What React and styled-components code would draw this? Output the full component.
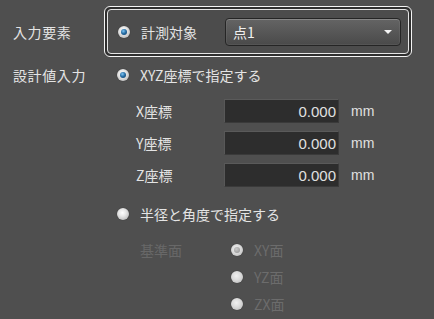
import React from "react";
import styled, { createGlobalStyle, css } from "styled-components";

const Global = createGlobalStyle`
  html, body { margin: 0; padding: 0; background: #4f4f4f; }
  body { font-family: "Noto Sans CJK JP", "Noto Sans", sans-serif; color: #e6e6e6; }
`;

const Page = styled.div`
  width: 434px;
  height: 319px;
  background: #4f4f4f;
  padding-top: 6px;
  box-sizing: border-box;
  font-size: 14px;
`;

const Row = styled.div`
  display: flex;
  align-items: center;
  height: ${(p) => p.$h || 26}px;
  margin-top: ${(p) => p.$mt || 0}px;
`;

const SideLabel = styled.div`
  width: 104px;
  padding-left: 13px;
  box-sizing: border-box;
  font-size: 14px;
  line-height: 20px;
  color: #e4e4e4;
  letter-spacing: 0.6px;
`;

const FocusFrame = styled.div`
  width: 308px;
  height: 51px;
  box-sizing: border-box;
  border: 1px solid #f4f4f4;
  border-radius: 6px;
  padding: 2px;
  background: #2f2f2f;
`;

const FocusInner = styled.div`
  height: 100%;
  box-sizing: border-box;
  border: 1px solid #e4e4e4;
  border-radius: 4px;
  background: #4c4c4c;
  display: flex;
  align-items: center;
  padding: 0 7px 0 10px;
`;

const RadioWrap = styled.label`
  display: flex;
  align-items: center;
  gap: 11px;
  font-size: 14px;
  line-height: 20px;
  color: ${(p) => (p.$disabled ? "#6c6c6c" : "#e4e4e4")};
`;

const RadioDot = styled.span`
  position: relative;
  width: 12px;
  height: 12px;
  border-radius: 50%;
  flex: none;
  box-sizing: border-box;
  background: radial-gradient(circle at 45% 40%, #ffffff 0%, #e8e8e8 35%, #a8a8a8 100%);
  box-shadow: 0 0 1px rgba(0, 0, 0, 0.5);
  ${(p) =>
    p.$disabled &&
    css`
      background: radial-gradient(circle at 45% 40%, #f0f0f0 0%, #dadada 45%, #b4b4b4 100%);
    `}
  ${(p) =>
    p.$checked &&
    css`
      &::after {
        content: "";
        position: absolute;
        left: 3px;
        top: 3px;
        width: 6px;
        height: 6px;
        border-radius: 50%;
        background: ${p.$disabled
          ? "radial-gradient(circle at 40% 35%, #c8c8c8 0%, #8e8e8e 100%)"
          : "radial-gradient(circle at 40% 35%, #7cc4f4 0%, #22689f 50%, #0d3a66 100%)"};
      }
    `}
`;

const Select = styled.div`
  margin-left: auto;
  width: 176px;
  height: 28px;
  box-sizing: border-box;
  border: 1px solid #252525;
  border-radius: 4px;
  background: linear-gradient(#646464, #4a4a4a);
  box-shadow: inset 0 1px 0 rgba(255, 255, 255, 0.18), inset 0 0 0 1px rgba(255, 255, 255, 0.06);
  display: flex;
  align-items: center;
  justify-content: space-between;
  padding: 0 8px 0 7px;
  font-size: 14px;
  color: #f0f0f0;
`;

const Arrow = styled.span`
  width: 0;
  height: 0;
  border-left: 4px solid transparent;
  border-right: 4px solid transparent;
  border-top: 4px solid #f4f4f4;
`;

const CoordRow = styled.div`
  display: flex;
  align-items: center;
  height: 24px;
  margin-top: ${(p) => p.$mt}px;
  padding-left: 136px;
`;

const CoordLabel = styled.div`
  width: 88px;
  font-size: 14px;
  line-height: 20px;
  color: #e4e4e4;
`;

const NumBox = styled.div`
  width: 115px;
  height: 24px;
  box-sizing: border-box;
  background: #2d2d2d;
  border: 1px solid #3a3a3a;
  border-top-color: #5a5a5a;
  border-left-color: #585858;
  display: flex;
  align-items: center;
  justify-content: flex-end;
  padding-right: 2px;
  font-family: "Liberation Sans", Arial, sans-serif;
  font-size: 15px;
  color: #e0e0e0;
`;

const Unit = styled.span`
  margin-left: 12px;
  font-family: "Liberation Sans", Arial, sans-serif;
  font-size: 14px;
  color: #e0e0e0;
`;

const Indent = styled.div`
  padding-left: ${(p) => p.$pl}px;
`;

const PlaneGrid = styled.div`
  display: grid;
  grid-template-columns: 91px auto;
  grid-auto-rows: 27px;
  align-items: center;
  padding-left: 140px;
  margin-top: 9px;
`;

const DimLabel = styled.div`
  font-size: 14px;
  color: #686868;
  line-height: 20px;
`;

const Radio = ({ checked, disabled, children }) => (
  <RadioWrap $disabled={disabled}>
    <RadioDot $checked={checked} $disabled={disabled} />
    {children}
  </RadioWrap>
);

export default function App() {
  return (
    <Page>
      <Global />
      <Row $h={51}>
        <SideLabel>入力要素</SideLabel>
        <FocusFrame>
          <FocusInner>
            <Radio checked>計測対象</Radio>
            <Select>
              <span>点1</span>
              <Arrow />
            </Select>
          </FocusInner>
        </FocusFrame>
      </Row>
      <Row $h={26} $mt={5}>
        <SideLabel>設計値入力</SideLabel>
        <Indent $pl={13}>
          <Radio checked>XYZ座標で指定する</Radio>
        </Indent>
      </Row>
      <CoordRow $mt={11}>
        <CoordLabel>X座標</CoordLabel>
        <NumBox>0.000</NumBox>
        <Unit>mm</Unit>
      </CoordRow>
      <CoordRow $mt={8}>
        <CoordLabel>Y座標</CoordLabel>
        <NumBox>0.000</NumBox>
        <Unit>mm</Unit>
      </CoordRow>
      <CoordRow $mt={8}>
        <CoordLabel>Z座標</CoordLabel>
        <NumBox>0.000</NumBox>
        <Unit>mm</Unit>
      </CoordRow>
      <Row $h={26} $mt={14}>
        <Indent $pl={117}>
          <Radio>半径と角度で指定する</Radio>
        </Indent>
      </Row>
      <PlaneGrid>
        <DimLabel>基準面</DimLabel>
        <Radio checked disabled>XY面</Radio>
        <span />
        <Radio disabled>YZ面</Radio>
        <span />
        <Radio disabled>ZX面</Radio>
      </PlaneGrid>
    </Page>
  );
}
